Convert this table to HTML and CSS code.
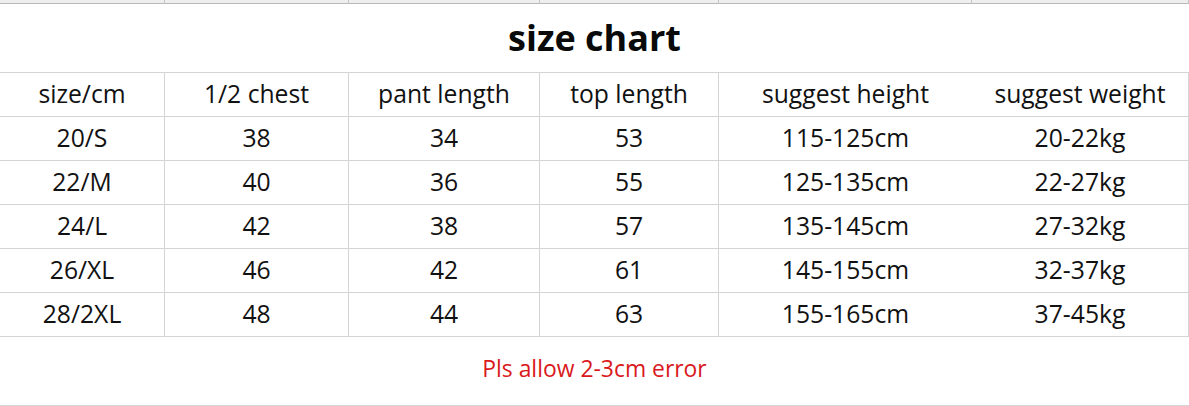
FILE: index.html
```html
<!DOCTYPE html>
<html>
<head>
<meta charset="utf-8">
<link rel="stylesheet" href="styles.css">
</head>
<body>
<div class="sheet">
  <div class="strip"></div><div class="strip"></div><div class="strip"></div><div class="strip"></div><div class="strip"></div><div class="strip"></div>
  <div class="title">size chart</div>
  <div class="cell">size/cm</div><div class="cell">1/2 chest</div><div class="cell">pant length</div><div class="cell">top length</div><div class="cell">suggest height</div><div class="cell">suggest weight</div>
  <div class="cell">20/S</div><div class="cell">38</div><div class="cell">34</div><div class="cell">53</div><div class="cell">115-125cm</div><div class="cell">20-22kg</div>
  <div class="cell">22/M</div><div class="cell">40</div><div class="cell">36</div><div class="cell">55</div><div class="cell">125-135cm</div><div class="cell">22-27kg</div>
  <div class="cell">24/L</div><div class="cell">42</div><div class="cell">38</div><div class="cell">57</div><div class="cell">135-145cm</div><div class="cell">27-32kg</div>
  <div class="cell">26/XL</div><div class="cell">46</div><div class="cell">42</div><div class="cell">61</div><div class="cell">145-155cm</div><div class="cell">32-37kg</div>
  <div class="cell">28/2XL</div><div class="cell">48</div><div class="cell">44</div><div class="cell">63</div><div class="cell">155-165cm</div><div class="cell">37-45kg</div>
  <div class="note">Pls allow 2-3cm error</div>
</div>
</body>
</html>
```
FILE: styles.css
```css
html, body {
  margin: 0;
  padding: 0;
  background: #ffffff;
}
.sheet {
  display: grid;
  grid-template-columns: 165px 184px 191px 179px 253px 217px;
  grid-template-rows: 4px 69px repeat(6, 44px) 69px;
  width: 1189px;
  font-family: "Open Sans", "Noto Sans", sans-serif;
  color: #111111;
}
.strip {
  background: #eeeeee;
  border-right: 1px solid #c6c6c6;
  border-bottom: 1px solid #b8b8b8;
}
.title {
  grid-column: 1 / -1;
  display: flex;
  align-items: center;
  justify-content: center;
  font-size: 36px;
  font-weight: 700;
  color: #0a0a0a;
  border-bottom: 1px solid #d4d4d4;
  padding-bottom: 2px;
}
.cell {
  display: flex;
  align-items: center;
  justify-content: center;
  font-size: 24.7px;
  padding-bottom: 2px;
  border-right: 1px solid #d4d4d4;
  border-bottom: 1px solid #d4d4d4;
}
.cell:nth-child(6n) {
  border-right: none;
}
.note {
  grid-column: 1 / -1;
  display: flex;
  align-items: center;
  justify-content: center;
  font-size: 22.9px;
  color: #d9191c;
  border-bottom: 1px solid #d4d4d4;
  padding-bottom: 5px;
}
```
